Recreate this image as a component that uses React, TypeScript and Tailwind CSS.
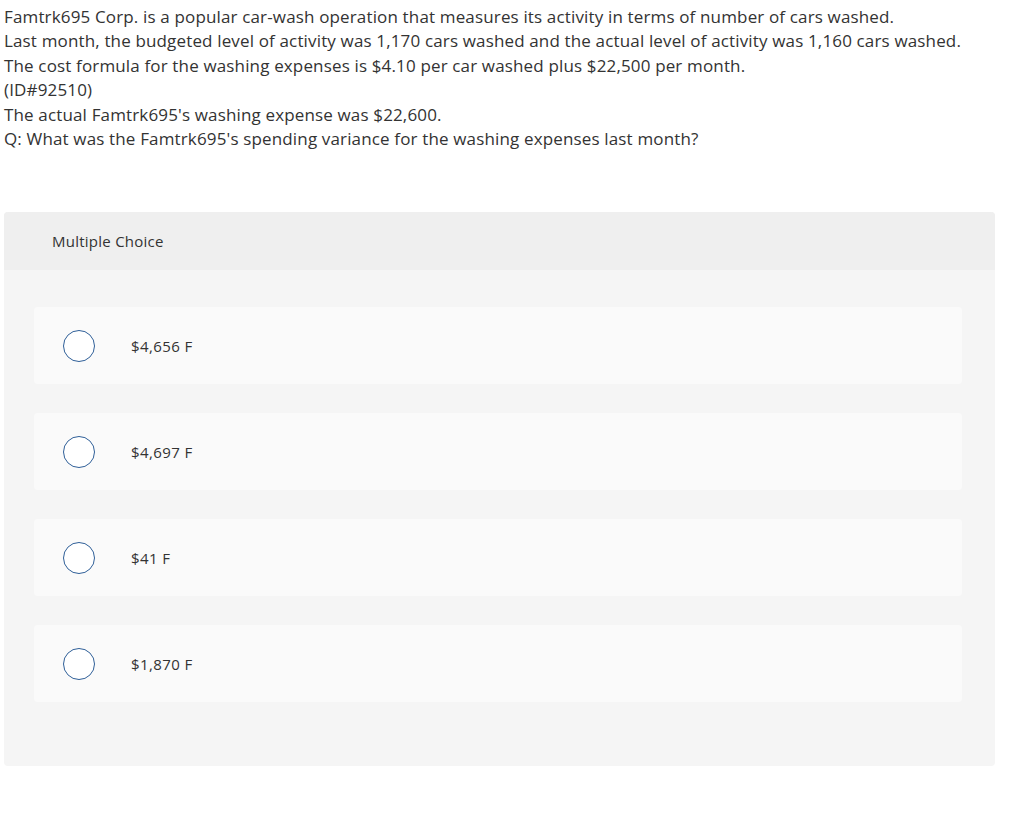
const choices = ['$4,656 F', '$4,697 F', '$41 F', '$1,870 F'];

export default function App() {
  return (
    <div className="min-h-[824px] bg-white text-[#333] font-['Open_Sans',sans-serif]">
      {/* Question */}
      <div className="pl-[4px] pt-[5px] text-[17px] leading-[24.4px] tracking-[0.15px]">
        <p>Famtrk695 Corp. is a popular car-wash operation that measures its activity in terms of number of cars washed.</p>
        <p>Last month, the budgeted level of activity was 1,170 cars washed and the actual level of activity was 1,160 cars washed.</p>
        <p>The cost formula for the washing expenses is $4.10 per car washed plus $22,500 per month.</p>
        <p>(ID#92510)</p>
        <p>The actual Famtrk695's washing expense was $22,600.</p>
        <p>Q: What was the Famtrk695's spending variance for the washing expenses last month?</p>
      </div>

      {/* Answer panel */}
      <div className="mt-[61px] ml-[4px] w-[991px] rounded-[4px] bg-[#f5f5f5] overflow-hidden">
        <div className="h-[58px] bg-[#efefef] pl-[48px] flex items-center text-[15px] tracking-[0.25px]">
          Multiple Choice
        </div>
        <div className="pt-[37px] pb-[64px] pl-[30px] pr-[33px] flex flex-col gap-[29px]">
          {choices.map((c) => (
            <div key={c} className="h-[77px] rounded-[4px] bg-[#fafafa] flex items-center pl-[29px]">
              <span className="w-[32px] h-[32px] rounded-full border-[1.5px] border-[#2f5f98] bg-white" />
              <span className="ml-[36px] text-[15px] tracking-[0.4px]">{c}</span>
            </div>
          ))}
        </div>
      </div>
    </div>
  );
}
